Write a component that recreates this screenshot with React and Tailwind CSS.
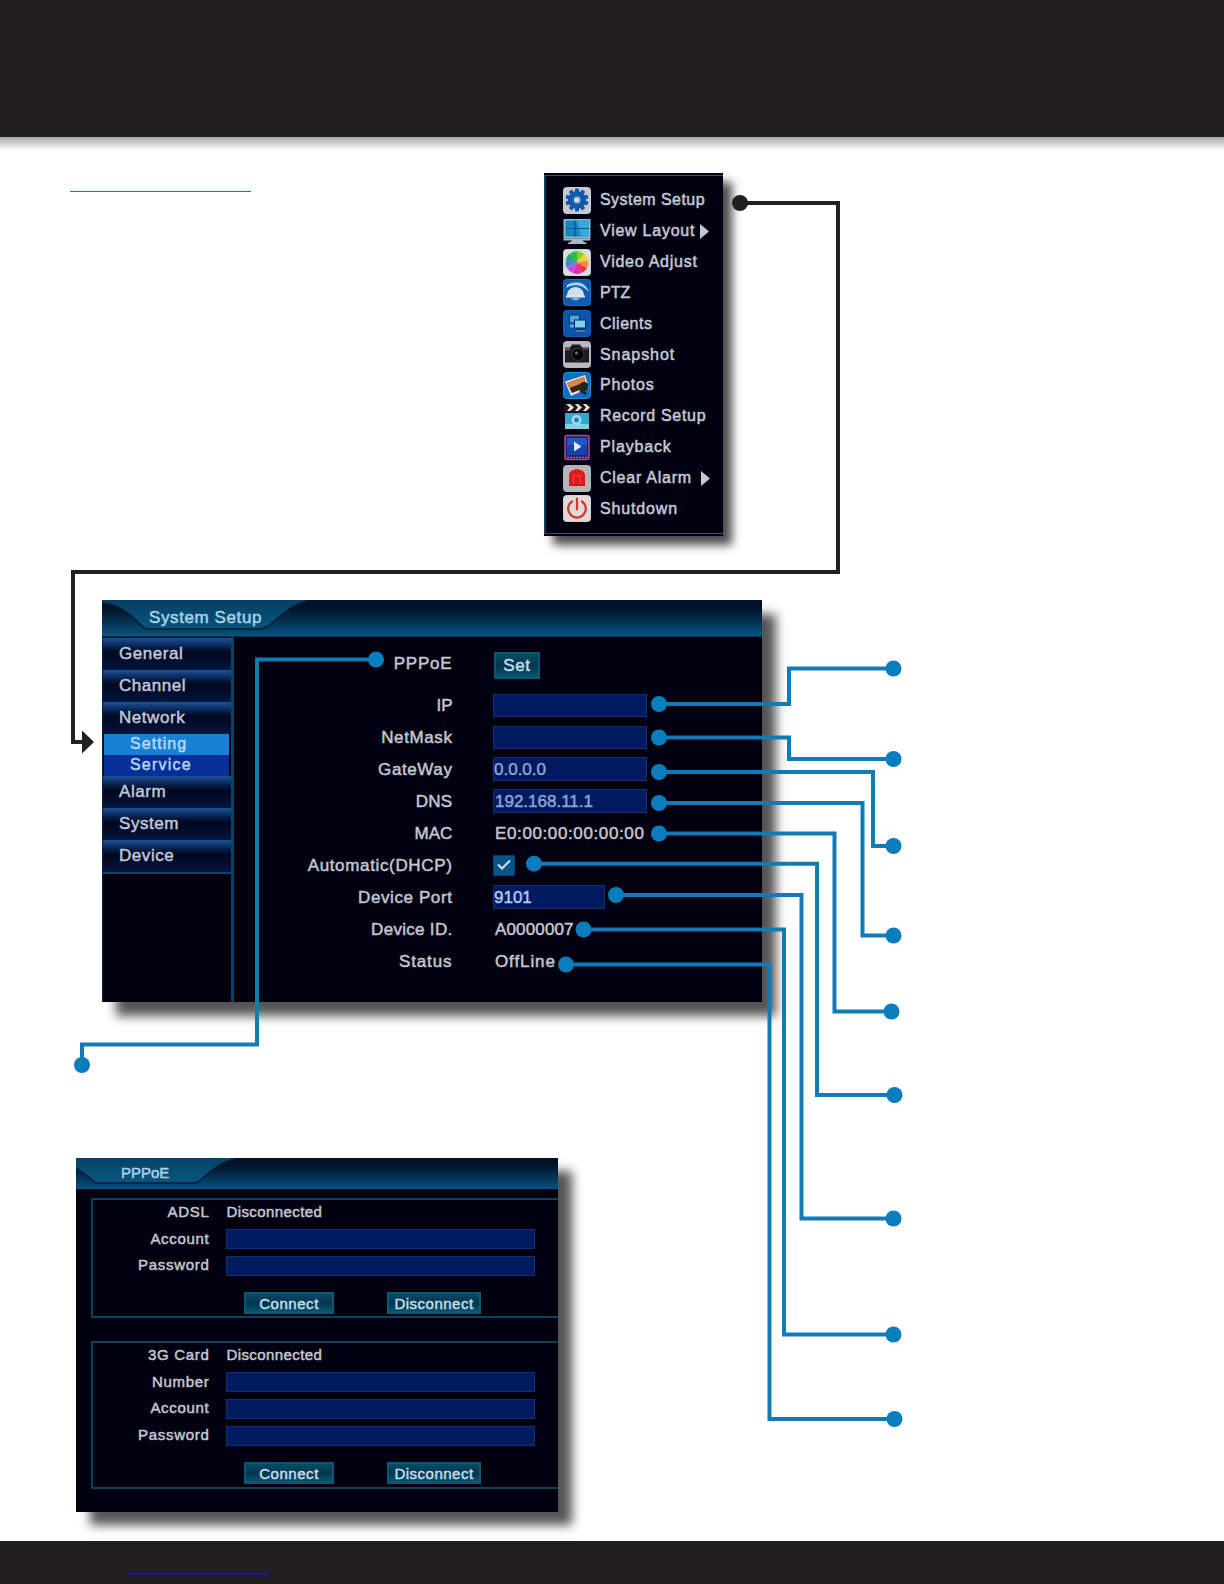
import React from 'react';

// --- Menu icons, all on a 28x27 tile ---
const Tile = ({ fill, stroke = '#c9ccd6', children }) => (
  <svg width="28" height="27" viewBox="0 0 28 27" className="shrink-0">
    <rect x="0.5" y="0.5" width="27" height="26" rx="3" fill={fill} stroke={stroke} />
    {children}
  </svg>
);

const GearIcon = () => (
  <Tile fill="#c6c9d2">
    <g fill="#1359ae">
      <circle cx="14" cy="13" r="9" />
      {[0, 36, 72, 108, 144, 180, 216, 252, 288, 324].map((a) => (
        <rect key={a} x="12" y="1.5" width="4" height="5" rx="1" transform={`rotate(${a} 14 13)`} />
      ))}
    </g>
    <circle cx="14" cy="13" r="5" fill="#2068bc" />
    <circle cx="14" cy="13" r="3" fill="#c9d6e6" />
  </Tile>
);

const LayoutIcon = () => (
  <svg width="28" height="27" viewBox="0 0 28 27" className="shrink-0">
    <rect x="0.5" y="1" width="27" height="19.5" fill="#8fb9cc" />
    <rect x="2.5" y="2.5" width="23.5" height="16" fill="#1787c4" />
    <path d="M14 2.5h12v16H18z" fill="#39a9dd" />
    <path d="M2.5 10.5H26M12 2.5v16" stroke="#07558f" strokeWidth="1.2" />
    <path d="M0.5 20.5h27v2h-8l1 1 3 1.5v1H5v-1l3-1.5 1-1H0.5z" fill="#a9b9c6" />
  </svg>
);

const wheel = ['#8ccf2c', '#f5d33a', '#f58b43', '#e9304c', '#e22bb0', '#c94bdb', '#4c87d8', '#1cab78', '#35b84a'];

const WheelIcon = () => (
  <Tile fill="#dcdde0">
    {wheel.map((c, i) => {
      const a = (i * 40 * Math.PI) / 180;
      const b = ((i + 1) * 40 * Math.PI) / 180;
      const p = (t) => `${14 + 11.5 * Math.sin(t)} ${13.5 - 11.5 * Math.cos(t)}`;
      return <path key={c} d={`M14 13.5L${p(a)}A11.5 11.5 0 0 1 ${p(b)}Z`} fill={c} />;
    })}
  </Tile>
);

const PtzIcon = () => (
  <Tile fill="#0c5cb6" stroke="#1b72c8">
    <path d="M4 6C12 1 23 3 26 13C20 6 12 4 3 9z" fill="#a9d2ea" />
    <path d="M4 17c0-12 17-12 17 0z" fill="#d3dfe8" />
    <path d="M3 16.5h19v2H3z" fill="#dfe8ee" />
    <path d="M8 18.5h9c-1 4-8 4-9 0z" fill="#86b0d0" />
  </Tile>
);

const ClientsIcon = () => (
  <Tile fill="#0b55ae" stroke="#155fb5">
    <rect x="6.5" y="5" width="10" height="8" fill="#4ba6dc" stroke="#062a5c" />
    <path d="M7 16h5" stroke="#5fabdc" strokeWidth="3" />
    <rect x="11.5" y="10" width="11" height="8" fill="#7cd0ea" stroke="#062a5c" />
    <path d="M13 20.5h9" stroke="#062a5c" strokeWidth="2.5" />
    <path d="M13 21h9" stroke="#8cc8e6" />
  </Tile>
);

const CameraIcon = () => (
  <Tile fill="#b9babf" stroke="#b4b6bc">
    <path d="M2 6.5h5l2-3h8l2 3h7v15H2z" fill="#1c1a1c" />
    <path d="M2 6.5h5v3H2zM20 6.5h5v2h-5z" fill="#5c5a5c" />
    <circle cx="15" cy="13.5" r="6" fill="#050507" stroke="#3a383c" />
    <circle cx="13.5" cy="12" r="1.6" fill="#6c6d78" />
  </Tile>
);

const PhotosIcon = () => (
  <Tile fill="#0f6fc6" stroke="#2489d8">
    <path d="M2 9.5L22 3l4 13L8 24z" fill="#e9e1d2" />
    <path d="M4 11L21 5l3 10L9 21z" fill="#3a2416" />
    <path d="M4 11L21 5l1.5 5L6.5 16z" fill="#d9893f" />
    <circle cx="21" cy="14.5" r="4.5" fill="#20242e" />
    <path d="M17 18l6 4" stroke="#20242e" strokeWidth="3" />
  </Tile>
);

const RecordIcon = () => (
  <svg width="28" height="27" viewBox="0 0 28 27" className="shrink-0">
    <path d="M1 1h26v8H1z" fill="#15191f" />
    <path d="M3 1h4l4 3.5L7 8H4l3-3.5zM12 1h3l4 3.5L15 8h-3l3-3.5zM20 1h3l4 3.5L23 8h-3l3-3.5z" fill="#e8e4d2" />
    <rect x="2" y="10" width="24" height="16" fill="#35a9cc" />
    <path d="M2 21h24v5H2z" fill="#7fd3de" />
    <circle cx="13.5" cy="17" r="5" fill="#9fdcf0" />
    <circle cx="13.5" cy="17" r="2.4" fill="#2579b4" />
  </svg>
);

const PlaybackIcon = () => (
  <svg width="28" height="27" viewBox="0 0 28 27" className="shrink-0">
    <rect x="2" y="1.5" width="24" height="24" rx="2" fill="#3a1a5c" stroke="#a548a8" strokeWidth="1.5" />
    <rect x="4" y="4" width="20" height="17" fill="#1243b0" />
    <path d="M4 4h20v7H4z" fill="#1f59c4" />
    <path d="M11 7.5l7.5 5-7.5 5z" fill="#e4e9f4" />
    <path d="M4 23.3h20" stroke="#b77396" strokeDasharray="2 1" />
  </svg>
);

const AlarmIcon = () => (
  <Tile fill="#b7b5ba" stroke="#b2b0b8">
    <path d="M6 20.5V10.5c0-8.5 16-8.5 16 0v10z" fill="#e01a1c" />
    <path d="M10.5 19v-8.5h7V19" fill="none" stroke="#f04238" strokeWidth="1.2" />
    <path d="M6 20.5h16" stroke="#a02224" />
  </Tile>
);

const PowerIcon = () => (
  <Tile fill="#e2d8d6" stroke="#d5cfd2">
    <path d="M9 6.5a8.8 8.8 0 1 0 10 0M14 3.5v11" fill="none" stroke="#c63c2c" strokeWidth="2.2" strokeLinecap="round" />
  </Tile>
);

const menuItems = [
  { label: 'System Setup', Icon: GearIcon, track: 'tracking-[0.45px]' },
  { label: 'View Layout', Icon: LayoutIcon, track: 'tracking-[0.75px]', arrow: 'ml-[5px]' },
  { label: 'Video Adjust', Icon: WheelIcon, track: 'tracking-[0.75px]' },
  { label: 'PTZ', Icon: PtzIcon, track: 'tracking-[0px]' },
  { label: 'Clients', Icon: ClientsIcon, track: 'tracking-[0.5px]' },
  { label: 'Snapshot', Icon: CameraIcon, track: 'tracking-[0.95px]' },
  { label: 'Photos', Icon: PhotosIcon, track: 'tracking-[0.8px]' },
  { label: 'Record Setup', Icon: RecordIcon, track: 'tracking-[0.7px]' },
  { label: 'Playback', Icon: PlaybackIcon, track: 'tracking-[0.85px]' },
  { label: 'Clear Alarm', Icon: AlarmIcon, track: 'tracking-[0.75px]', arrow: 'ml-[9px]' },
  { label: 'Shutdown', Icon: PowerIcon, track: 'tracking-[0.85px]' },
];

const MainMenu = () => (
  <nav className="mt-[23px] ml-[293px] h-[363px] w-[179px] bg-[#01020f] pt-[2px] shadow-[9px_9px_9px_rgba(0,0,0,0.7)]">
    <ul className="h-[359px] border-y border-l-2 border-y-[#12607c] border-l-[#0c4058] pt-[9px] pl-[17px]">
      {menuItems.map(({ label, Icon, track, arrow }) => (
        <li key={label} className="flex h-[30.85px] items-center text-[16px] text-[#c5c8d8]">
          <Icon />
          <span className={`ml-[9px] leading-none whitespace-nowrap ${track}`}>{label}</span>
          {arrow && (
            <svg width="9" height="15" viewBox="0 0 9 15" className={`shrink-0 ${arrow}`}>
              <path d="M0 0l9 7.5-9 7.5z" fill="#c5c8d8" />
            </svg>
          )}
        </li>
      ))}
    </ul>
  </nav>
);

const Field = ({ className = '', children }) => (
  <div className={`flex items-center border border-[#102f78] bg-[#001a60] ${className}`}>{children}</div>
);

const Button = ({ className = '', children }) => (
  <button className={`flex items-center justify-center border-2 border-[#0a5874] bg-linear-to-b from-[#064c66] via-[#04354e] to-[#065870] text-[#c3dcea] ${className}`}>
    {children}
  </button>
);

// --- System Setup window ---
const SideItem = ({ last, children }) => (
  <div className={`flex items-center bg-linear-to-b from-[#1d519a] via-[#01071f] via-45% to-[#03163f] pb-px pl-4 text-[17px] leading-none tracking-[0.55px] text-[#bfc6d8] ${last ? 'h-[34px] border-b-2 border-[#15406c]' : 'h-8'}`}>
    {children}
  </div>
);

const Sidebar = () => (
  <aside className="w-[132px] border-r-[3px] border-l border-r-[#0d4263] border-l-[#062440] pt-px">
    <SideItem>General</SideItem>
    <SideItem>Channel</SideItem>
    <SideItem>Network</SideItem>
    <div className="mr-[2px] ml-px flex h-[21px] items-center bg-[#1680d4] pb-px pl-[26px] text-[16px] leading-none tracking-[1.05px] text-[#b5d8f4]">Setting</div>
    <div className="mr-[2px] ml-px flex h-[21px] items-center bg-[#05309a] pb-px pl-[26px] text-[16px] leading-none tracking-[1.2px] text-[#b5d2f4]">Service</div>
    <SideItem>Alarm</SideItem>
    <SideItem>System</SideItem>
    <SideItem last>Device</SideItem>
  </aside>
);

const SettingRow = ({ label, track = 'tracking-[0.6px]', children }) => (
  <div className="flex h-8 items-center text-[17px] leading-none text-[#c4c5d2]">
    <span className={`w-[218.5px] text-right whitespace-nowrap ${track}`}>{label}</span>
    <div className="ml-[40.5px] flex items-center">{children}</div>
  </div>
);

const SystemSetup = () => (
  <section className="mt-16 ml-[102px] h-[402px] w-[660px] bg-[#01010f] shadow-[14px_14px_10px_rgba(0,0,0,0.67)]">
    <div className="relative flex h-[37px] items-center border-b border-[#07304f] bg-linear-to-b from-[#021127] from-20% to-[#045482]">
      <svg width="210" height="36" viewBox="0 0 210 36" className="absolute top-0 left-0">
        <defs>
          <linearGradient id="setupTab" x1="0" y1="0" x2="0" y2="1">
            <stop offset="0" stopColor="#053f63" />
            <stop offset="1" stopColor="#08557f" />
          </linearGradient>
        </defs>
        <path d="M0 0H206C190 4 182 14 171 22Q165 28 159 29H46Q42 29 38 24C28 14 16 4 0 3z" fill="url(#setupTab)" />
        <path d="M206 1C190 4 182 14 171 22Q165 28 159 29H46Q42 29 38 24C28 14 16 4 0 3" fill="none" stroke="#021a35" strokeWidth="1.5" />
      </svg>
      <h2 className="relative mb-[2px] ml-[47px] text-[17px] leading-none tracking-[0.6px] text-[#a9d1e6]">System Setup</h2>
    </div>
    <div className="flex h-[365px]">
      <Sidebar />
      <div className="pt-[15px]">
        <div className="mb-[10px] flex h-[27px] text-[17px] leading-none text-[#c4c5d2]">
          <span className="mt-[3px] w-[218.5px] text-right tracking-[0.8px]">PPPoE</span>
          <Button className="ml-[41.5px] h-[27px] w-[46px] tracking-[0.6px]">Set</Button>
        </div>
        <SettingRow label="IP" track="tracking-[0px]"><Field className="h-[23px] w-[154px]" /></SettingRow>
        <SettingRow label="NetMask"><Field className="h-[23px] w-[154px]" /></SettingRow>
        <SettingRow label="GateWay"><Field className="h-6 w-[154px] text-[#8ba3ce]">0.0.0.0</Field></SettingRow>
        <SettingRow label="DNS" track="tracking-[0.3px]"><Field className="h-6 w-[154px] pl-px text-[#8ba3ce]">192.168.11.1</Field></SettingRow>
        <SettingRow label="MAC" track="tracking-[0.1px]"><span className="ml-[2px] tracking-[0.62px]">E0:00:00:00:00:00</span></SettingRow>
        <SettingRow label="Automatic(DHCP)" track="tracking-[0.65px]">
          <div className="flex h-[21px] w-[22px] items-center justify-center border border-[#063a78] bg-[#075486]">
            <svg width="14" height="12" viewBox="0 0 14 12">
              <path d="M1 5.5l4 4 8-8" fill="none" stroke="#cfe4ee" strokeWidth="2" />
            </svg>
          </div>
        </SettingRow>
        <SettingRow label="Device Port"><Field className="h-6 w-[112px] text-[#b0c6ea]">9101</Field></SettingRow>
        <SettingRow label="Device ID." track="tracking-[0.3px]"><span className="ml-[2px] tracking-[0.15px]">A0000007</span></SettingRow>
        <SettingRow label="Status" track="tracking-[0.9px]"><span className="ml-[2px] tracking-[0.9px]">OffLine</span></SettingRow>
      </div>
    </div>
  </section>
);

// --- PPPoE window ---
const AccountRow = ({ label, children }) => (
  <div className="flex h-[26.8px] items-center">
    <span className="w-[116.5px] pb-[2px] text-right tracking-[0.7px]">{label}</span>
    <div className="ml-[16px] flex items-center">{children || <Field className="h-5 w-[309px]" />}</div>
  </div>
);

const ButtonRow = () => (
  <div className="flex pl-[151px]">
    <Button className="h-[22px] w-[90px] tracking-[0.55px]">Connect</Button>
    <Button className="ml-[53px] h-[22px] w-[94px] tracking-[0.5px]">Disconnect</Button>
  </div>
);

const groupBox = 'ml-[15px] border-y-2 border-l-2 border-[#123f58]';

const PppoeSetup = () => (
  <section className="mt-[156px] ml-[76px] h-[354px] w-[482px] bg-[#01010f] text-[15px] leading-none text-[#c4c5d2] shadow-[14px_13px_10px_rgba(0,0,0,0.67)]">
    <div className="relative flex h-[31px] items-center bg-linear-to-b from-[#021127] from-20% to-[#045482]">
      <svg width="162" height="30" viewBox="0 0 162 30" className="absolute top-0 left-0">
        <defs>
          <linearGradient id="pppoeTab" x1="0" y1="0" x2="0" y2="1">
            <stop offset="0" stopColor="#054468" />
            <stop offset="1" stopColor="#085681" />
          </linearGradient>
        </defs>
        <path d="M0 0H160C146 3 138 11 128 19Q123 25 117 25H22Q18 25 14 20L0 10z" fill="url(#pppoeTab)" />
        <path d="M160 1C146 3 138 11 128 19Q123 25 117 25H22Q18 25 14 20L0 10" fill="none" stroke="#021a35" strokeWidth="1.5" />
      </svg>
      <h2 className="relative mb-[3px] ml-[45px] text-[#a9d1e6]">PPPoE</h2>
    </div>
    <div className={`${groupBox} mt-[9px] h-[120px]`}>
      <div className="-mt-px">
        <AccountRow label="ADSL"><span className="mb-[2px] ml-[1px] tracking-[0.4px]">Disconnected</span></AccountRow>
        <AccountRow label="Account" />
        <AccountRow label="Password" />
      </div>
      <div className="h-[13px]" />
      <ButtonRow />
    </div>
    <div className={`${groupBox} mt-[23px] h-[148px]`}>
      <div className="-mt-px">
        <AccountRow label="3G Card"><span className="mb-[2px] ml-[1px] tracking-[0.4px]">Disconnected</span></AccountRow>
        <AccountRow label="Number" />
        <AccountRow label="Account" />
        <AccountRow label="Password" />
      </div>
      <div className="h-[13px]" />
      <ButtonRow />
    </div>
  </section>
);

// --- Callout lines: elbow path and its end dots ---
const callouts = [
  { d: 'M376 659.5H257V1044.5H82V1065', dots: [[376, 659.5], [82, 1065]] },
  { d: 'M659 704H789V668.5H893', dots: [[659, 704], [893.5, 668.5]] },
  { d: 'M659 737.5H789V759H893', dots: [[659, 737.5], [893.5, 759]] },
  { d: 'M659 772H873V846H893', dots: [[659, 772], [893.5, 846]] },
  { d: 'M659 803H862.5V935.5H893', dots: [[659, 803], [893.5, 935.5]] },
  { d: 'M659 833.5H834.5V1011.5H891', dots: [[659, 833.5], [891.5, 1011.5]] },
  { d: 'M534 863.7H817V1095H894', dots: [[534, 863.7], [894.5, 1095]] },
  { d: 'M616 895H801.5V1218.5H893', dots: [[616, 895], [893.5, 1218.5]] },
  { d: 'M583.5 929.5H784V1334.5H893', dots: [[583.5, 929.5], [893.5, 1334.5]] },
  { d: 'M566 964.5H769.5V1419H894', dots: [[566, 964.5], [894.5, 1419]] },
];

const Callouts = () => (
  <svg width="1224" height="1584" viewBox="0 0 1224 1584" className="pointer-events-none absolute top-0 left-0">
    <path d="M740 203H838V572H73V742H84" fill="none" stroke="#221f20" strokeWidth="4" />
    <circle cx="740" cy="203" r="8" fill="#221f20" />
    <path d="M82 730.5L94 742L82 753.5z" fill="#221f20" />
    {callouts.map(({ d, dots }) => (
      <g key={d}>
        <path d={d} fill="none" stroke="#117bb7" strokeWidth="4" />
        {dots.map(([x, y]) => (
          <circle key={`${x}-${y}`} cx={x} cy={y} r="8" fill="#0a7dbd" />
        ))}
      </g>
    ))}
  </svg>
);

const App = () => {
  return (
    <div className="relative h-[1584px] w-[1224px] overflow-hidden bg-white font-['Liberation_Sans',Arial,sans-serif] [-webkit-text-stroke:0.5px_currentColor]">
      <header className="h-[137px] bg-[#231f20]" />
      <div className="h-[13px] bg-linear-to-b from-[#a9a8a8] to-white" />
      <div className="flex pl-[70px]">
        <div className="mt-[40px] h-[2px] w-[181px] border-b border-[#1f7fa8] bg-[#d5f2fa]" />
        <MainMenu />
      </div>
      <SystemSetup />
      <PppoeSetup />
      <footer className="mt-[29px] h-[43px] bg-[#231f20] pt-[32px] pl-[127px]">
        <div className="h-[2px] w-[142px] bg-[#1e12a0]" />
      </footer>
      <Callouts />
    </div>
  );
};

export default App;
